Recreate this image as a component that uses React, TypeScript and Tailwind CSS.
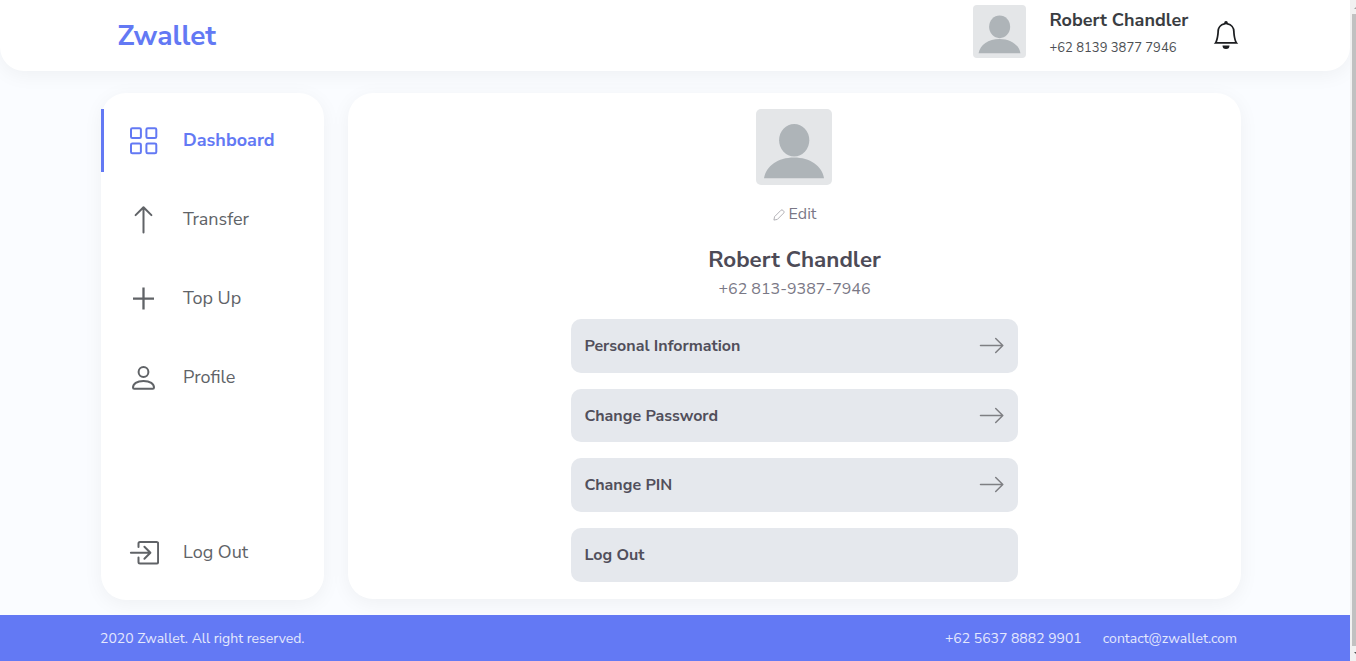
import type { ReactNode } from "react";
import { BsBell } from "react-icons/bs";

function Avatar({ className }: { className: string }) {
  return (
    <svg viewBox="0 0 76 76" className={className} role="img" aria-label="Avatar">
      <rect width="76" height="76" fill="#e4e6e8" />
      <ellipse cx="38.2" cy="31.3" rx="15.1" ry="16.2" fill="#aeb4b8" />
      <path d="M8 69.3C10 57 22 48.6 38 48.6S66 57 68 69.3Z" fill="#aeb4b8" />
    </svg>
  );
}

function Icon({ children, width = 2 }: { children: ReactNode; width?: number }) {
  return (
    <svg
      viewBox="0 0 32 32"
      className="size-8 shrink-0"
      fill="none"
      stroke="currentColor"
      strokeWidth={width}
      strokeLinecap="round"
      strokeLinejoin="round"
    >
      {children}
    </svg>
  );
}

const gridIcon = (
  <Icon>
    <rect x="4" y="3.200" width="9.900" height="9.900" rx="1.400" />
    <rect x="19.400" y="3.200" width="9.900" height="9.900" rx="1.400" />
    <rect x="4" y="18.400" width="9.900" height="9.900" rx="1.400" />
    <rect x="19.400" y="18.400" width="9.900" height="9.900" rx="1.400" />
  </Icon>
);

const upIcon = (
  <Icon>
    <path d="M16.5 28.500V3.500M8.6 11.100l7.900-7.900 7.900 7.900" />
  </Icon>
);

const plusIcon = (
  <Icon width={2.3}>
    <path strokeLinecap="butt" d="M16.5 4.500v22M6 15.600h21" />
  </Icon>
);

const userIcon = (
  <Icon>
    <circle cx="16.5" cy="10" r="4.9" />
    <path d="M6 25.600C6 22 9.700 19 16.5 19S27 22 27 25.600c0 .8-.4 1.2-1.2 1.2H7.200C6.400 26.800 6 26.400 6 25.600Z" />
  </Icon>
);

const logoutIcon = (
  <Icon>
    <path d="M11.500 10.100V6.500A1.500 1.500 0 0 1 13 5h16.600A1.500 1.500 0 0 1 31.100 6.500v18.600a1.500 1.500 0 0 1-1.500 1.500H13a1.500 1.500 0 0 1-1.500-1.500V20.600" />
    <path d="M3.900 15.800H23M17.400 9.800l6 6-6 6" />
  </Icon>
);

function NavItem({ icon, label, active = false }: { icon: ReactNode; label: string; active?: boolean }) {
  return (
    <a
      className={`flex h-[63px] items-center gap-6 border-l-[3px] pl-[23px] text-[18px] ${
        active ? "border-[#6379f4] font-bold text-[#6379f4]" : "border-transparent text-[#606367]"
      }`}
    >
      {icon}
      <span className="pb-[1px] whitespace-nowrap">{label}</span>
    </a>
  );
}

function Option({ label, arrow = true }: { label: string; arrow?: boolean }) {
  return (
    <button className="flex h-[53.6px] w-full items-center justify-between rounded-[10px] bg-[#e5e8ed] pr-[13px] pl-[13.4px] text-[16px] font-bold text-[#514f5b]">
      <span>{label}</span>
      {arrow && (
        <svg
          viewBox="0 0 28 28"
          className="size-7 text-[#7e7f83]"
          fill="none"
          stroke="currentColor"
          strokeWidth="1.5"
          strokeLinecap="round"
          strokeLinejoin="round"
        >
          <path d="M3.500 13.500h22.200M18.700 6.500l7.100 7-7.100 7" />
        </svg>
      )}
    </button>
  );
}

export default function App() {
  return (
    <div
      className="flex h-[661px] w-[1356px] overflow-hidden bg-[#fafcff] font-['Nunito_Sans',sans-serif]"
    >
      <div className="flex w-[1350px] flex-col">
        <header className="flex h-[71px] shrink-0 justify-between rounded-b-[24px] bg-white pr-[110px] pl-[117.5px] shadow-[0_4px_20px_rgba(0,0,0,0.05)]">
          <h1 className="pt-[2px] text-[28px] leading-[68px] font-bold text-[#6379f4]">Zwallet</h1>
          <div className="flex pt-[5px]">
            <Avatar className="size-[53px] rounded-[4px]" />
            <div className="ml-[23.5px] w-[162.5px] pt-px">
              <p className="text-[18px] leading-[28px] font-bold text-[#3a3d42]">Robert Chandler</p>
              <p className="pt-px text-[13px] leading-[26px] text-[#4d5054]">+62 8139 3877 7946</p>
            </div>
            <BsBell className="mt-4 size-7 text-[#1c1e21]" />
          </div>
        </header>

        <main className="flex grow items-start gap-6 pt-[22px] pl-[101px]">
          <nav className="flex h-[507px] w-[223px] flex-col rounded-[25px] bg-white pt-4 pb-[16px] shadow-[0_4px_20px_rgba(0,0,0,0.05)]">
            <div className="flex flex-col gap-4">
              <NavItem icon={gridIcon} label="Dashboard" active />
              <NavItem icon={upIcon} label="Transfer" />
              <NavItem icon={plusIcon} label="Top Up" />
              <NavItem icon={userIcon} label="Profile" />
            </div>
            <div className="mt-auto">
              <NavItem icon={logoutIcon} label="Log Out" />
            </div>
          </nav>

          <section className="flex h-[506px] w-[893px] flex-col items-center rounded-[25px] bg-white pt-4 shadow-[0_4px_20px_rgba(0,0,0,0.05)]">
            <Avatar className="mr-px size-[76px] shrink-0 rounded-[5px]" />
            <div className="mt-[17px] flex h-6 items-center gap-[4px] text-[16px] text-[#7a7886]">
              <svg viewBox="0 0 13 13" className="mt-px size-[12px]" fill="none" stroke="#a3a2a8" strokeWidth="0.9" strokeLinejoin="round">
                <path d="M1 12l.7-3.700L8.600 1.400a1.500 1.500 0 0 1 2.100 0l.9.9a1.500 1.500 0 0 1 0 2.100L4.700 11.300 1 12Z" />
              </svg>
              <span>Edit</span>
            </div>
            <h2 className="mt-[18px] text-[22.4px] leading-8 font-bold text-[#4d4b57]">Robert Chandler</h2>
            <p className="mt-px text-[16px] leading-6 text-[#7a7886]">+62 813-9387-7946</p>
            <div className="mt-[18.25px] flex w-[447px] flex-col gap-4">
              <Option label="Personal Information" />
              <Option label="Change Password" />
              <Option label="Change PIN" />
              <Option label="Log Out" arrow={false} />
            </div>
          </section>
        </main>

        <footer className="flex h-[46px] shrink-0 items-center justify-between bg-[#6379f4] pr-[113px] pl-[100px] text-[14px] text-[#e4e8fd]">
          <span>2020 Zwallet. All right reserved.</span>
          <div className="flex gap-[21px]">
            <span>+62 5637 8882 9901</span>
            <span>contact@zwallet.com</span>
          </div>
        </footer>
      </div>

      <div className="flex w-[6px] flex-col justify-between bg-[#f1f1f1]">
        <svg viewBox="0 0 6 14" className="h-[14px] w-[6px]">
          <path d="M4 9l3.500-3.500V9Z" fill="#a3a3a3" />
        </svg>
        <div className="ml-[2px] h-[632px] bg-[#c1c1c1]" />
        <svg viewBox="0 0 6 15" className="h-[15px] w-[6px]">
          <path d="M4 6l3.500 3.500V6Z" fill="#505050" />
        </svg>
      </div>
    </div>
  );
}
